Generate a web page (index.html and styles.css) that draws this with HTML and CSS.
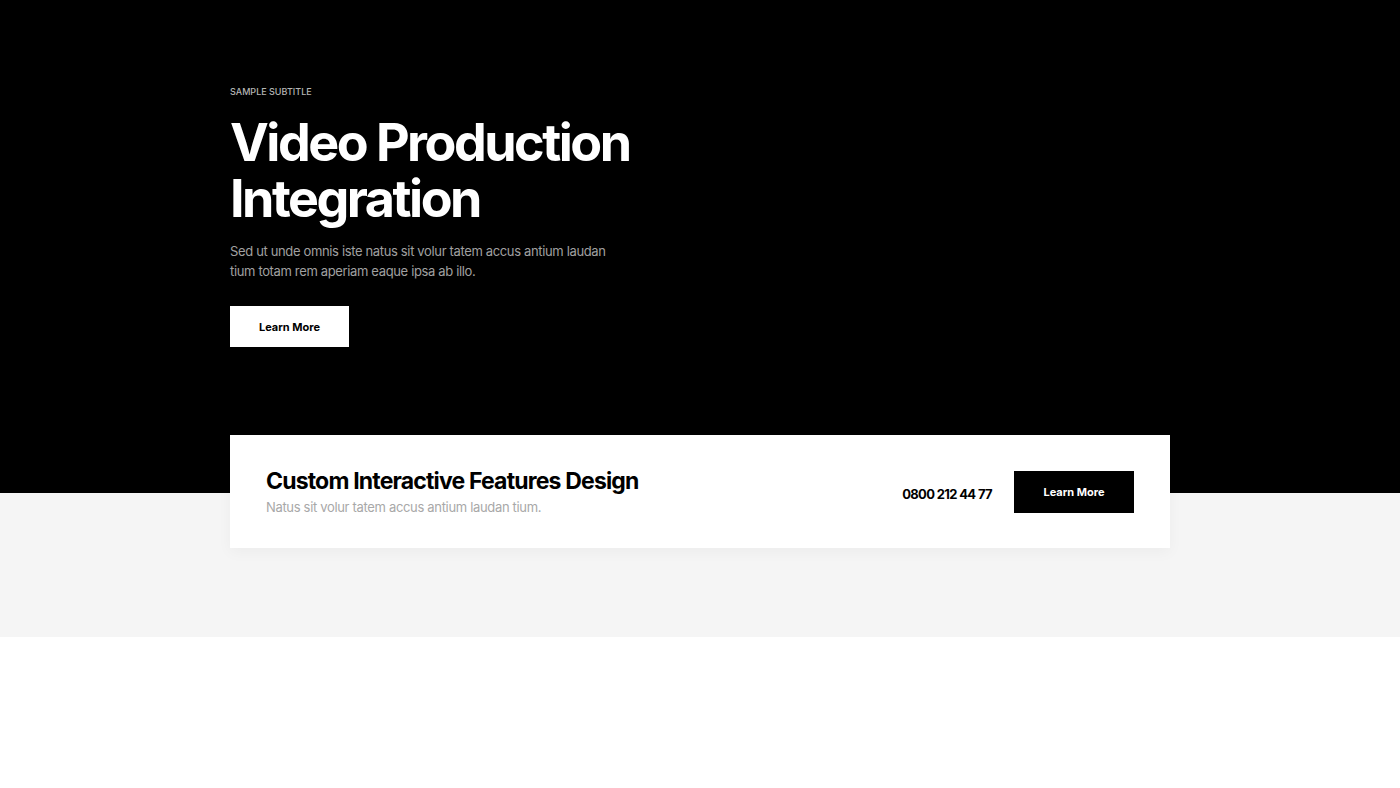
FILE: index.html
```html
<!DOCTYPE html>
<html lang="en">
  <head>
    <meta charset="UTF-8" />
    <meta name="viewport" content="width=device-width, initial-scale=1.0" />
    <title>Video Production Integration</title>
    <link rel="stylesheet" href="styles.css">
  </head>
  <body>
    <section class="hero">
      <div class="container">
        <span class="subtitle">Sample Subtitle</span>
        <h1>Video Production<br />Integration</h1>
        <p>Sed ut unde omnis iste natus sit volur tatem accus antium laudan<br />tium totam rem aperiam eaque ipsa ab illo.</p>
        <a class="btn btn-light" href="#">Learn More</a>
      </div>
    </section>

    <section class="cta-band">
      <div class="container">
        <div class="cta-card">
          <div class="cta-text">
            <h2>Custom Interactive Features Design</h2>
            <p>Natus sit volur tatem accus antium laudan tium.</p>
          </div>
          <div class="cta-actions">
            <span class="phone">0800 212 44 77</span>
            <a class="btn btn-dark" href="#">Learn More</a>
          </div>
        </div>
      </div>
    </section>
  </body>
</html>
```

FILE: styles.css
```css
body {
  margin: 0;
  font-family: "Inter", "Noto Sans", sans-serif;
  background: #fff;
  color: #000;
}

.container {
  width: 940px;
  margin: 0 auto;
}

.hero {
  background: #000;
  height: 435px;
  box-sizing: border-box;
  padding-top: 86px;
}

.subtitle {
  display: block;
  font-size: 9px;
  font-weight: 500;
  text-transform: uppercase;
  color: #b5b5b5;
  line-height: 12px;
}

.hero h1 {
  margin: 17px 0 0;
  font-size: 52px;
  line-height: 56px;
  font-weight: 700;
  letter-spacing: -0.048em;
  color: #fff;
}

.hero p {
  margin: 14px 0 0;
  font-size: 13px;
  line-height: 20px;
  color: #a0a0a0;
  letter-spacing: -0.027em;
}

.btn {
  display: inline-flex;
  align-items: center;
  justify-content: center;
  width: 119px;
  height: 41px;
  font-size: 11px;
  font-weight: 700;
  text-decoration: none;
}

.btn-light {
  margin-top: 25px;
  background: #fff;
  color: #000;
}

.btn-dark {
  width: 120px;
  height: 42px;
  background: #000;
  color: #fff;
}

.cta-band {
  background: linear-gradient(#000 58px, #f5f5f5 58px);
  padding-bottom: 89px;
}

.cta-card {
  display: flex;
  align-items: center;
  justify-content: space-between;
  height: 113px;
  box-sizing: border-box;
  padding: 0 36px;
  background: #fff;
  box-shadow: 0 4px 14px rgba(0, 0, 0, 0.04);
}

.cta-text h2 {
  margin: 0;
  font-size: 23px;
  line-height: 28px;
  font-weight: 700;
  letter-spacing: -0.036em;
}

.cta-text p {
  margin: 3px 0 0;
  font-size: 13px;
  line-height: 18px;
  color: #a8a8a8;
  letter-spacing: -0.025em;
}

.cta-actions {
  display: flex;
  align-items: center;
  gap: 22px;
  margin-top: 1px;
}

.phone {
  font-size: 13px;
  font-weight: 700;
  letter-spacing: -0.05em;
  margin-top: 4px;
}
```
